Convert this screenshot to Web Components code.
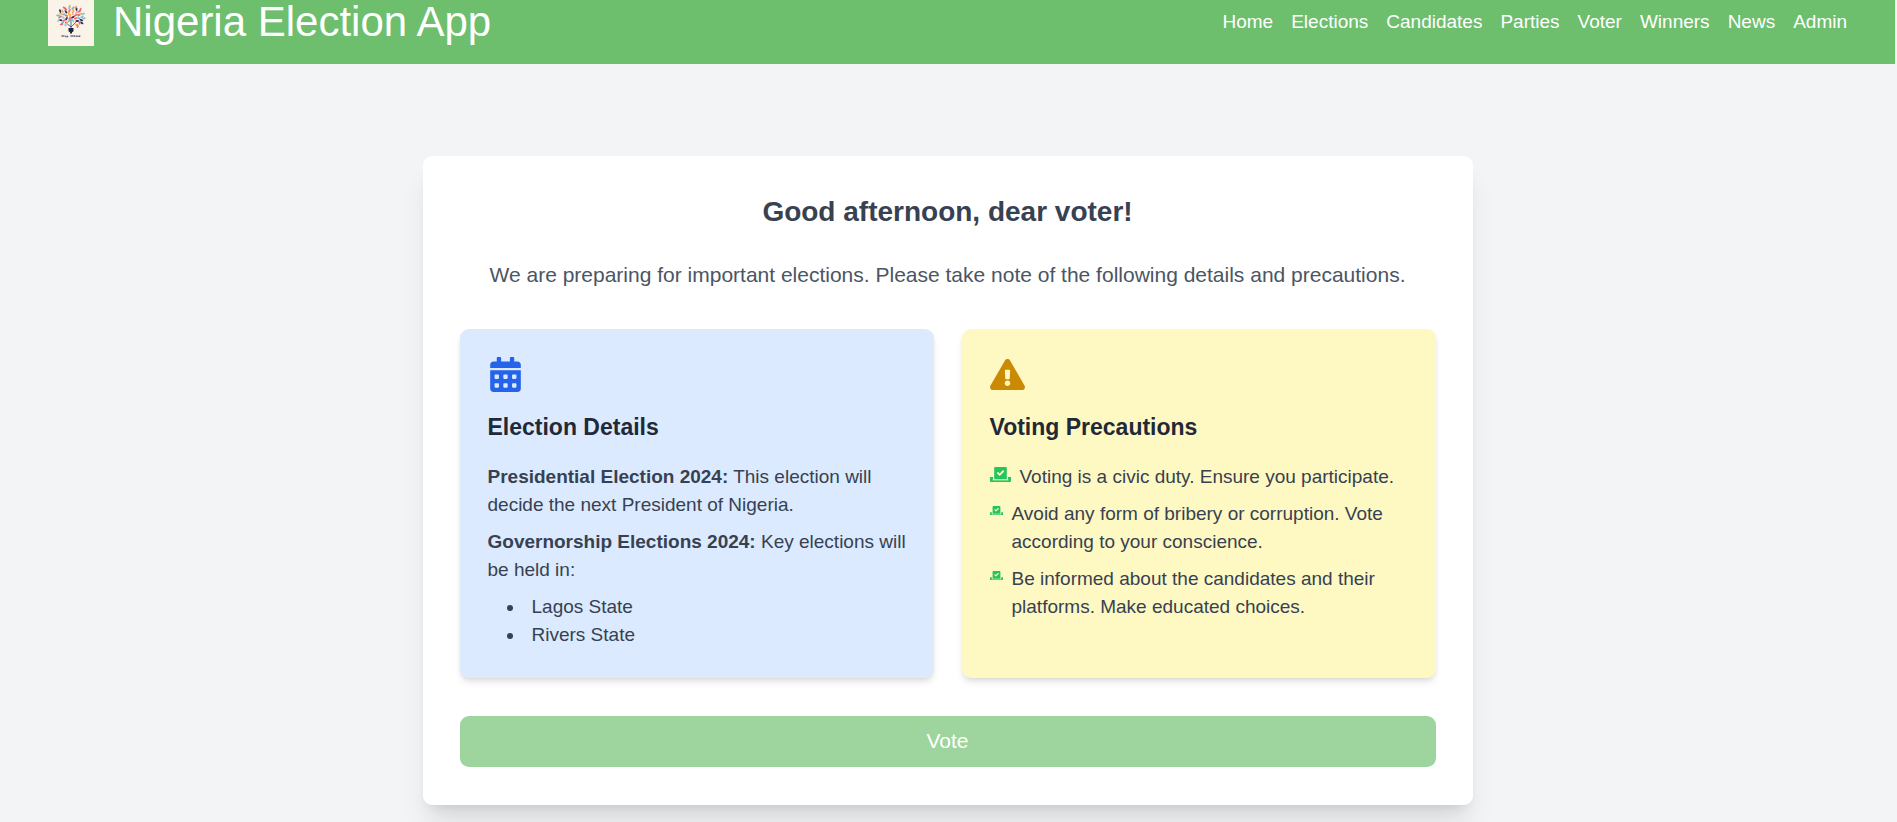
<!DOCTYPE html>
<html lang="en">
<head>
<meta charset="utf-8">
<title>Nigeria Election App</title>
<style>
  html { background: #f3f4f6; }
  body { margin: 0; padding-right: 2px; box-sizing: border-box; min-height: 100vh; font-family: "Liberation Sans", Arial, sans-serif; font-size: 19px; line-height: 28px; color: #374151; }
</style>
</head>
<body>
<election-app></election-app>

<script>
const define = (name, html) => {
  const template = document.createElement('template');
  template.innerHTML = html;
  customElements.define(name, class extends HTMLElement {
    constructor() {
      super();
      this.attachShadow({ mode: 'open' }).append(template.content.cloneNode(true));
    }
  });
};

define('icon-calendar', `
<style>:host{display:block;width:35px;height:35px;color:#2563eb} svg{display:block;width:100%;height:100%}</style>
<svg viewBox="0 0 448 512" fill="currentColor" fill-rule="evenodd" aria-hidden="true"><path d="M0 464c0 26.500 21.500 48 48 48h352c26.500 0 48-21.500 48-48V192H0zM76 256h40q12 0 12 12v40q0 12-12 12H76q-12 0-12-12v-40q0-12 12-12zM204 256h40q12 0 12 12v40q0 12-12 12h-40q-12 0-12-12v-40q0-12 12-12zM332 256h40q12 0 12 12v40q0 12-12 12h-40q-12 0-12-12v-40q0-12 12-12zM76 384h40q12 0 12 12v40q0 12-12 12H76q-12 0-12-12v-40q0-12 12-12zM204 384h40q12 0 12 12v40q0 12-12 12h-40q-12 0-12-12v-40q0-12 12-12zM332 384h40q12 0 12 12v40q0 12-12 12h-40q-12 0-12-12v-40q0-12 12-12z"/><path d="M400 64h-48V16c0-8.800-7.200-16-16-16h-32c-8.800 0-16 7.200-16 16v48H160V16c0-8.800-7.200-16-16-16h-32c-8.800 0-16 7.200-16 16v48H48C21.500 64 0 85.500 0 112v48h448v-48c0-26.500-21.500-48-48-48z"/></svg>`);

define('icon-warning', `
<style>:host{display:block;width:35px;height:35px;color:#ca8a04} svg{display:block;width:100%;height:100%}</style>
<svg viewBox="0 0 576 512" fill="currentColor" aria-hidden="true"><path d="M569.517 440.013C587.975 472.007 564.806 512 527.94 512H48.054c-36.937 0-59.999-40.055-41.577-71.987L246.423 23.985c18.467-32.009 64.72-31.951 83.154 0l239.94 416.028zM288 354c-25.405 0-46 20.595-46 46s20.595 46 46 46 46-20.595 46-46-20.595-46-46-46zm-43.673-165.346l7.418 136c.347 6.364 5.609 11.346 11.982 11.346h48.546c6.373 0 11.635-4.982 11.982-11.346l7.418-136c.375-6.874-5.098-12.654-11.982-12.654h-63.383c-6.884 0-12.356 5.78-11.981 12.654z"/></svg>`);

define('icon-ballot', `
<style>:host{display:block;color:#22c55e} svg{display:block;width:100%}</style>
<svg viewBox="0 0 640 464" fill="currentColor" aria-hidden="true"><path d="M0 304h92v100H548V304h92v118c0 23-19 42-42 42H42c-23 0-42-19-42-42z"/><path d="M64 380h512v24H64z" fill="#fef9c3" opacity=".6"/><path d="M512 376V32.300C512 14.400 497.500 0 479.700 0H160.400C142.500 0 128 14.500 128 32.300V376h384zM211.200 180l25.500-25.300c4.200-4.200 11-4.200 15.200.1l41.300 41.600 95.200-94.400c4.200-4.200 11-4.200 15.200.1l25.300 25.500c4.200 4.200 4.200 11-.1 15.200L300.500 270c-4.200 4.200-11 4.200-15.200-.1l-74.100-74.700c-4.300-4.200-4.200-11 0-15.200z"/></svg>`);

/* Logo: a crown of coloured leaves, laid out in rings over a bulb base. */
const logoLeaves = () => {
  const colours = ['#f0696f', '#fbb040', '#26305a', '#8fc9d8', '#f7a58f', '#f0696f', '#7fb4cc'];
  const rings = [[2, 3, 5], [5, 8, 20], [8, 13, 10], [11, 18, 0], [13, 14, 8]];
  let leaves = '';
  let n = 0;
  for (const [radius, count, start] of rings) {
    for (let i = 0; i < count; i++, n++) {
      const angle = start + i * 360 / count;
      if (radius > 7 && angle > 62 && angle < 118) continue;
      const rad = angle * Math.PI / 180;
      const x = 23 + radius * Math.cos(rad);
      const y = 17 + radius * 0.82 * Math.sin(rad);
      const turn = angle + (n % 3 - 1) * 34;
      leaves += `<ellipse cx="${x.toFixed(2)}" cy="${y.toFixed(2)}" rx="1.9" ry=".95" fill="${colours[(n * 3 + radius) % 7]}" transform="rotate(${turn.toFixed(0)} ${x.toFixed(2)} ${y.toFixed(2)})"/>`;
    }
  }
  return leaves;
};

define('app-logo', `
<style>:host{display:block;width:46px;height:46px} svg{display:block;width:100%;height:100%}</style>
<svg viewBox="0 0 46 46" role="img" aria-label="Logo">
<rect width="46" height="46" fill="#faf3e8"/>
<path d="M23 29V17M23 27l-6-5M23 27l6-6" stroke="#26305a" stroke-width=".7" fill="none"/>
${logoLeaves()}
<path d="M20.500 28h5v3.200l-1.500 1v1.300h-2v-1.300l-1.500-1z" fill="#1c2347"/>
<path d="M13.500 36h3M17.200 36.400h3.300M22.500 36h4.500M27.600 36.300h5" stroke="#26305a" stroke-width="1.500" stroke-dasharray="1.300 .4" opacity=".8"/>
</svg>`);

define('nav-link', `
<style>:host{display:block} a{color:inherit;text-decoration:none}</style>
<a href="#"><slot></slot></a>`);

define('app-header', `
<style>
:host{display:block;background:#6dbe6d;color:#fff}
header{display:flex;align-items:flex-start;justify-content:space-between;height:64px;padding:0 48px}
.brand{display:flex;align-items:flex-start;gap:19px}
.brand span{font-size:42px;line-height:44px}
nav{display:flex;gap:18px;padding-top:8px}
</style>
<header>
  <div class="brand"><app-logo></app-logo><span>Nigeria Election App</span></div>
  <nav>
    <nav-link>Home</nav-link><nav-link>Elections</nav-link><nav-link>Candidates</nav-link><nav-link>Parties</nav-link><nav-link>Voter</nav-link><nav-link>Winners</nav-link><nav-link>News</nav-link><nav-link>Admin</nav-link>
  </nav>
</header>`);

define('info-card', `
<style>
:host{display:block;box-sizing:border-box;flex:1;min-width:0;padding:28px 20px 29px 28px;border-radius:9px;background:var(--card-bg);box-shadow:0 5px 7px -1px rgba(0,0,0,.1),0 2px 5px -2px rgba(0,0,0,.1)}
h2{margin:19px 0;font-size:23px;line-height:33px;font-weight:700;color:#1f2937}
</style>
<slot name="icon"></slot>
<h2><slot name="title"></slot></h2>
<slot></slot>`);

define('election-details', `
<style>
:host{display:block}
p{margin:0 0 9px}
ul{margin:0;padding:0 0 0 37px}
li{padding-left:7px}
</style>
<p><strong>Presidential Election 2024:</strong> This election will decide the next President of Nigeria.</p>
<p><strong>Governorship Elections 2024:</strong> Key elections will be held in:</p>
<ul><li>Lagos State</li><li>Rivers State</li></ul>`);

define('precaution-item', `
<style>
:host{display:flex;align-items:flex-start;gap:9px}
icon-ballot{flex:none;width:var(--icon-size,13px);margin-top:var(--icon-top,6px)}
</style>
<icon-ballot></icon-ballot><span><slot></slot></span>`);

define('voting-precautions', `
<style>
:host{display:block}
ul{list-style:none;margin:0;padding:0;display:grid;gap:9px}
.lead{--icon-size:21px;--icon-top:4px}
</style>
<ul>
<li><precaution-item class="lead">Voting is a civic duty. Ensure you participate.</precaution-item></li>
<li><precaution-item>Avoid any form of bribery or corruption. Vote according to your conscience.</precaution-item></li>
<li><precaution-item>Be informed about the candidates and their platforms. Make educated choices.</precaution-item></li>
</ul>`);

define('vote-button', `
<style>
:host{display:block}
button{display:block;width:100%;padding:8px 19px 10px;border:0;border-radius:9px;background:#9ed59e;color:#fff;font-family:inherit;font-size:21px;line-height:33px}
</style>
<button type="button"><slot></slot></button>`);

define('election-app', `
<style>
:host{display:block}
main{display:flow-root;padding:0 19px}
.panel{box-sizing:border-box;max-width:1050px;margin:92px auto 0;padding:37px 37px 38px;border-radius:9px;background:#fff;box-shadow:0 23px 29px -6px rgba(0,0,0,.1),0 9px 12px -7px rgba(0,0,0,.1)}
h1{margin:0 0 27px;font-size:28px;line-height:38px;font-weight:700;text-align:center}
.intro{margin:0 0 38px;font-size:21px;line-height:33px;text-align:center;color:#4b5563}
.cards{display:flex;gap:28px;margin-bottom:38px}
.blue{--card-bg:#dbeafe}
.yellow{--card-bg:#fef9c3}
</style>
<app-header></app-header>
<main>
<section class="panel">
  <h1>Good afternoon, dear voter!</h1>
  <p class="intro">We are preparing for important elections. Please take note of the following details and precautions.</p>
  <div class="cards">
    <info-card class="blue"><icon-calendar slot="icon"></icon-calendar><span slot="title">Election Details</span><election-details></election-details></info-card>
    <info-card class="yellow"><icon-warning slot="icon"></icon-warning><span slot="title">Voting Precautions</span><voting-precautions></voting-precautions></info-card>
  </div>
  <vote-button>Vote</vote-button>
</section>
</main>`);
</script>
</body>
</html>
